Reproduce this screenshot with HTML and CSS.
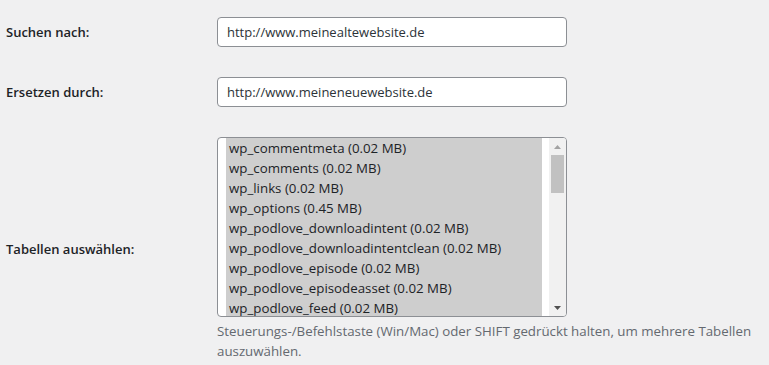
FILE: index.html
```html
<!DOCTYPE html>
<html lang="de">
<head>
<meta charset="utf-8">
<link rel="stylesheet" href="styles.css">
</head>
<body>
<div class="form">
  <div class="row">
    <div class="label">Suchen nach:</div>
    <div class="field"><input class="text" type="text" value="http://www.meinealtewebsite.de"></div>
  </div>
  <div class="row">
    <div class="label">Ersetzen durch:</div>
    <div class="field"><input class="text" type="text" value="http://www.meineneuewebsite.de"></div>
  </div>
  <div class="row">
    <div class="label">Tabellen auswählen:</div>
    <div class="field">
      <div class="listbox">
        <div class="options">
          <div class="opt">wp_commentmeta (0.02 MB)</div>
          <div class="opt">wp_comments (0.02 MB)</div>
          <div class="opt">wp_links (0.02 MB)</div>
          <div class="opt">wp_options (0.45 MB)</div>
          <div class="opt">wp_podlove_downloadintent (0.02 MB)</div>
          <div class="opt">wp_podlove_downloadintentclean (0.02 MB)</div>
          <div class="opt">wp_podlove_episode (0.02 MB)</div>
          <div class="opt">wp_podlove_episodeasset (0.02 MB)</div>
          <div class="opt">wp_podlove_feed (0.02 MB)</div>
        </div>
        <div class="scrollbar">
          <div class="arrow up"><svg width="7" height="4" viewBox="0 0 7 4"><path d="M0 4L3.5 0L7 4Z" fill="#a3a3a3"/></svg></div>
          <div class="track"><div class="thumb"></div></div>
          <div class="arrow down"><svg width="7" height="4" viewBox="0 0 7 4"><path d="M0 0L7 0L3.5 4Z" fill="#505050"/></svg></div>
        </div>
      </div>
      <p class="desc">Steuerungs-/Befehlstaste (Win/Mac) oder SHIFT gedrückt halten, um mehrere Tabellen auszuwählen.</p>
    </div>
  </div>
</div>
</body>
</html>
```

FILE: styles.css
```css
html, body {
  margin: 0;
  padding: 0;
  background: #f0f0f1;
}
body {
  font-family: "Open Sans", "Noto Sans", sans-serif;
  font-size: 13px;
  color: #1d2327;
  overflow: hidden;
}
.form {
  padding-top: 2px;
}
.row {
  display: grid;
  grid-template-columns: 217px 1fr;
  align-items: center;
}
.label {
  padding-left: 6px;
  font-weight: 600;
  color: #1d2327;
}
.field {
  padding: 15px 10px 15px 0;
}
.text {
  box-sizing: border-box;
  width: 350px;
  height: 30px;
  margin: 0;
  padding: 0 9px;
  border: 1px solid #8c8f94;
  border-radius: 4px;
  background: #fff;
  font-family: inherit;
  font-size: 13px;
  color: #2c3338;
  display: block;
  outline: none;
}
.listbox {
  box-sizing: border-box;
  width: 350px;
  height: 180px;
  border: 1px solid #8c8f94;
  border-radius: 4px;
  background: #fff;
  display: flex;
  overflow: hidden;
}
.options {
  flex: 1;
  padding: 0 7px 0 8px;
  overflow: hidden;
}
.opt {
  background: #cecece;
  color: #1d2327;
  font-size: 13.3px;
  height: 20px;
  line-height: 20px;
  padding-left: 3px;
  white-space: nowrap;
}
.scrollbar {
  width: 17px;
  background: #f1f1f1;
  display: flex;
  flex-direction: column;
}
.arrow {
  height: 17px;
  display: flex;
  align-items: center;
  justify-content: center;
}
.arrow svg {
  display: block;
}
.track {
  flex: 1;
}
.thumb {
  margin: 0 2px;
  height: 38px;
  background: #c1c1c1;
}
.desc {
  margin: 4px 0 0;
  color: #646970;
  font-size: 13.3px;
  line-height: 20px;
  max-width: 545px;
}
```
